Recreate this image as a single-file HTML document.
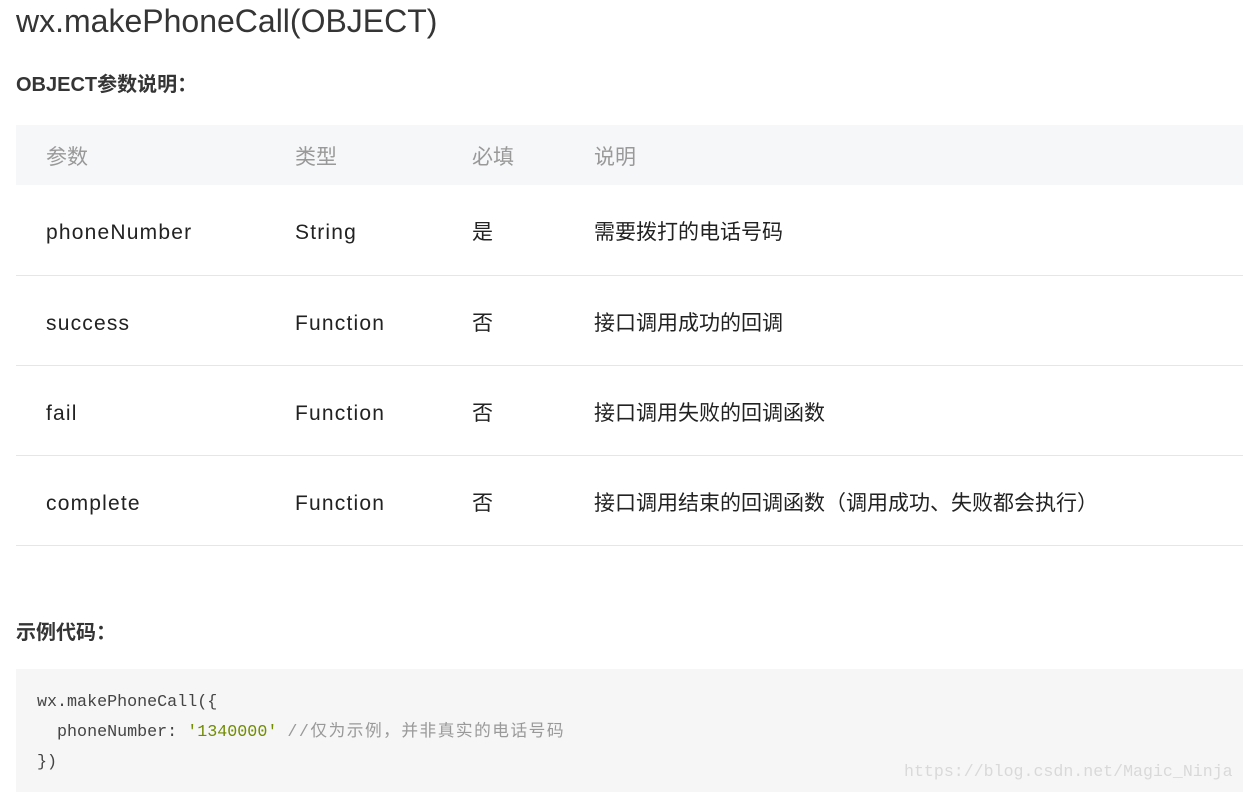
<!DOCTYPE html>
<html><head><meta charset="utf-8"><style>
body{margin:0;width:1245px;height:792px;overflow:hidden;background:#fff;font-family:"Liberation Sans","Noto Sans CJK SC",sans-serif;color:#222;position:relative}
.a{position:absolute;white-space:pre}
h1{position:absolute;left:16px;top:0;margin:0;font-weight:normal;font-size:32px;line-height:42px;color:#353535}
.h2{font-weight:bold;font-size:20px;line-height:30px;color:#353535}
.hdr{position:absolute;left:16px;top:125px;width:1227px;height:60px;background:#f6f7f9}
.line{position:absolute;left:16px;width:1227px;height:1px;background:#e6e6e6}
.c{font-size:21px;line-height:30px;color:#222}
.l{letter-spacing:1.2px}
.g{color:#999}
.code{position:absolute;left:16px;top:669px;width:1227px;height:123px;background:#f6f6f6}
.m{font-family:"Liberation Mono","Noto Sans CJK SC",monospace;font-size:16.7px;line-height:30px;color:#444}
</style></head><body>
<h1>wx.makePhoneCall(OBJECT)</h1>
<div class="a h2" style="left:16px;top:70px">OBJECT参数说明：</div>
<div class="hdr"></div>
<div class="a c g" style="left:46px;top:143px">参数</div>
<div class="a c g" style="left:295px;top:143px">类型</div>
<div class="a c g" style="left:472px;top:143px">必填</div>
<div class="a c g" style="left:594px;top:143px">说明</div>

<div class="a c l" style="left:46px;top:218px">phoneNumber</div>
<div class="a c l" style="left:295px;top:218px">String</div>
<div class="a c" style="left:472px;top:218px">是</div>
<div class="a c" style="left:594px;top:218px">需要拨打的电话号码</div>
<div class="line" style="top:275px"></div>

<div class="a c l" style="left:46px;top:309px">success</div>
<div class="a c l" style="left:295px;top:309px">Function</div>
<div class="a c" style="left:472px;top:309px">否</div>
<div class="a c" style="left:594px;top:309px">接口调用成功的回调</div>
<div class="line" style="top:365px"></div>

<div class="a c l" style="left:46px;top:399px">fail</div>
<div class="a c l" style="left:295px;top:399px">Function</div>
<div class="a c" style="left:472px;top:399px">否</div>
<div class="a c" style="left:594px;top:399px">接口调用失败的回调函数</div>
<div class="line" style="top:455px"></div>

<div class="a c l" style="left:46px;top:489px">complete</div>
<div class="a c l" style="left:295px;top:489px">Function</div>
<div class="a c" style="left:472px;top:489px">否</div>
<div class="a c" style="left:594px;top:489px">接口调用结束的回调函数（调用成功、失败都会执行）</div>
<div class="line" style="top:545px"></div>

<div class="a h2" style="left:16px;top:618px">示例代码：</div>
<div class="code"></div>
<div class="a m" style="left:37px;top:688px">wx.makePhoneCall({</div>
<div class="a m" style="left:37px;top:718px">  phoneNumber: <span style="color:#718c00">'1340000'</span> <span style="color:#999;letter-spacing:1.5px">//仅为示例，并非真实的电话号码</span></div>
<div class="a m" style="left:37px;top:748px">})</div>
<div class="a" style="left:904px;top:758px;font-family:'Liberation Mono',monospace;font-size:16.6px;line-height:28px;color:#d9d9d9">https://blog.csdn.net/Magic_Ninja</div>
</body></html>
